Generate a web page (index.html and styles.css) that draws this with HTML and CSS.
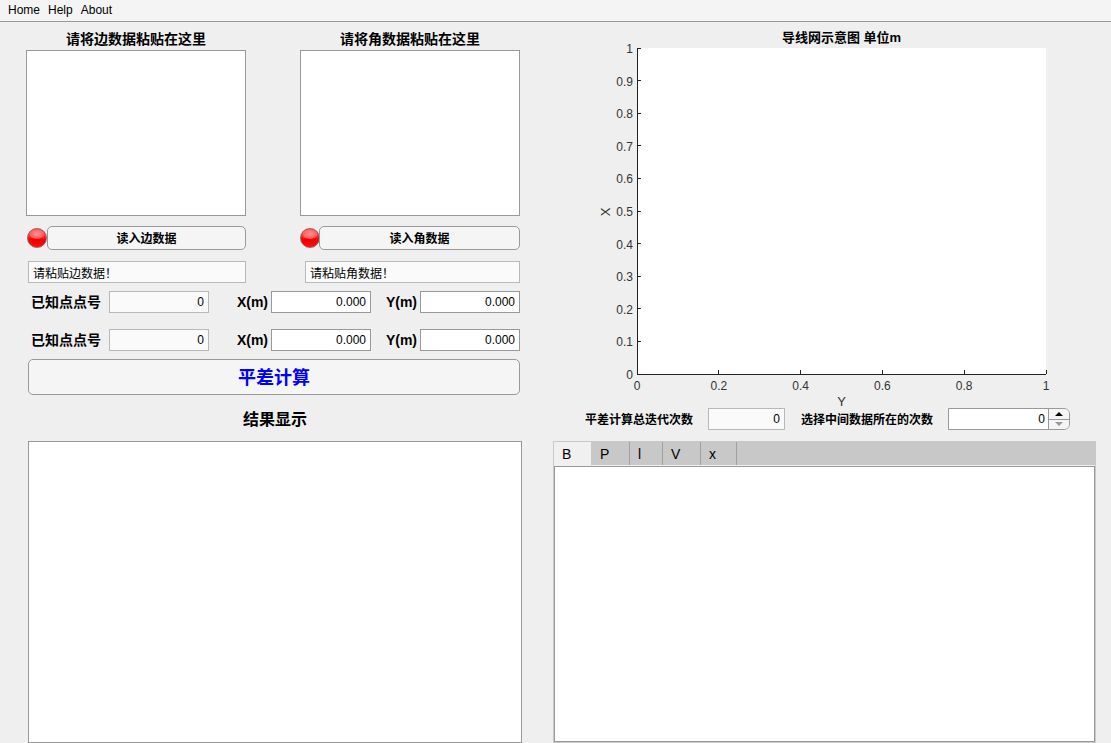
FILE: index.html
```html
<!DOCTYPE html>
<html lang="zh-CN">
<head>
<meta charset="utf-8">
<title>导线网平差</title>
<link rel="stylesheet" href="styles.css">
</head>
<body>
<nav class="menubar">
  <button type="button" class="menu-item">Home</button>
  <button type="button" class="menu-item">Help</button>
  <button type="button" class="menu-item">About</button>
</nav>
<main class="workspace">
  <section class="left-pane">
    <div class="sources">
      <div class="source">
        <label class="source-title" for="edges">请将边数据粘贴在这里</label>
        <textarea class="box source-text" id="edges"></textarea>
        <div class="load-row load-row-edge">
          <span class="lamp"></span>
          <button type="button" class="btn">读入边数据</button>
        </div>
        <input class="field status status-edge" type="text" aria-label="边数据状态" value="请粘贴边数据！" readonly>
      </div>
      <div class="source">
        <label class="source-title" for="angles">请将角数据粘贴在这里</label>
        <textarea class="box source-text" id="angles"></textarea>
        <div class="load-row">
          <span class="lamp"></span>
          <button type="button" class="btn btn-overlap">读入角数据</button>
        </div>
        <input class="field status status-angle" type="text" aria-label="角数据状态" value="请粘贴角数据！" readonly>
      </div>
    </div>
    <div class="points">
      <label class="point-label" for="p1">已知点点号</label>
      <input class="field num" id="p1" type="text" value="0" readonly>
      <label class="coord-label" for="x1">X(m)</label>
      <input class="field num editable" id="x1" type="text" value="0.000">
      <label class="coord-label" for="y1">Y(m)</label>
      <input class="field num editable" id="y1" type="text" value="0.000">
      <label class="point-label" for="p2">已知点点号</label>
      <input class="field num" id="p2" type="text" value="0" readonly>
      <label class="coord-label" for="x2">X(m)</label>
      <input class="field num editable" id="x2" type="text" value="0.000">
      <label class="coord-label" for="y2">Y(m)</label>
      <input class="field num editable" id="y2" type="text" value="0.000">
    </div>
    <button type="button" class="btn compute">平差计算</button>
    <label class="result-title" for="result">结果显示</label>
    <textarea class="box result-text" id="result"></textarea>
  </section>

  <section class="right-pane">
    <h2 class="chart-title">导线网示意图 单位m</h2>
    <div class="chart">
      <svg class="plot" role="img" aria-label="导线网示意图">
        <rect width="100%" height="100%" fill="#fff"/>
        <g class="axis">
          <line x1="0" y1="0" x2="0" y2="100%"/>
          <line x1="0" y1="100%" x2="100%" y2="100%"/>
          <line x1="0" x2="4" y1="0" y2="0"/>
          <line x1="0" x2="4" y1="10%" y2="10%"/>
          <line x1="0" x2="4" y1="20%" y2="20%"/>
          <line x1="0" x2="4" y1="30%" y2="30%"/>
          <line x1="0" x2="4" y1="40%" y2="40%"/>
          <line x1="0" x2="4" y1="50%" y2="50%"/>
          <line x1="0" x2="4" y1="60%" y2="60%"/>
          <line x1="0" x2="4" y1="70%" y2="70%"/>
          <line x1="0" x2="4" y1="80%" y2="80%"/>
          <line x1="0" x2="4" y1="90%" y2="90%"/>
        </g>
        <svg class="ticks" y="100%" width="100%" height="1">
          <line x1="20%" x2="20%" y1="0" y2="-4"/>
          <line x1="40%" x2="40%" y1="0" y2="-4"/>
          <line x1="60%" x2="60%" y1="0" y2="-4"/>
          <line x1="80%" x2="80%" y1="0" y2="-4"/>
          <line x1="100%" x2="100%" y1="0" y2="-4"/>
        </svg>
        <g class="y-values">
          <text x="-4" y="0" dy="5">1</text>
          <text x="-4" y="10%" dy="5">0.9</text>
          <text x="-4" y="20%" dy="5">0.8</text>
          <text x="-4" y="30%" dy="5">0.7</text>
          <text x="-4" y="40%" dy="5">0.6</text>
          <text x="-4" y="50%" dy="5">0.5</text>
          <text x="-4" y="60%" dy="5">0.4</text>
          <text x="-4" y="70%" dy="5">0.3</text>
          <text x="-4" y="80%" dy="5">0.2</text>
          <text x="-4" y="90%" dy="5">0.1</text>
          <text x="-4" y="100%" dy="5">0</text>
        </g>
        <g class="x-values">
          <text x="0" y="100%" dy="16">0</text>
          <text x="20%" y="100%" dy="16">0.2</text>
          <text x="40%" y="100%" dy="16">0.4</text>
          <text x="60%" y="100%" dy="16">0.6</text>
          <text x="80%" y="100%" dy="16">0.8</text>
          <text x="100%" y="100%" dy="16">1</text>
        </g>
        <text class="axis-name" x="50%" y="100%" dy="32">Y</text>
        <svg class="x-name" x="-27" y="50%" width="1" height="1">
          <text class="axis-name" x="-1" transform="rotate(-90)">X</text>
        </svg>
      </svg>
    </div>
    <div class="iterations">
      <label class="iter-label" for="total">平差计算总迭代次数</label>
      <input class="field num total" id="total" type="text" value="0" readonly>
      <label class="iter-label" for="pick">选择中间数据所在的次数</label>
      <div class="spinner">
        <input class="spin-value" id="pick" type="text" value="0">
        <div class="spin-buttons">
          <button type="button" class="spin" aria-label="增加"><svg width="8" height="4" viewBox="0 0 8 4"><path d="M0 4 4 0l4 4z" fill="#000"/></svg></button>
          <button type="button" class="spin spin-down" aria-label="减少" disabled><svg width="8" height="4" viewBox="0 0 8 4"><path d="M0 0h8L4 4z" fill="#999"/></svg></button>
        </div>
      </div>
    </div>
    <div class="tabs">
      <div class="tab-strip" role="tablist">
        <button type="button" role="tab" class="tab tab-active" aria-selected="true">B</button>
        <button type="button" role="tab" class="tab">P</button>
        <button type="button" role="tab" class="tab tab-l">l</button>
        <button type="button" role="tab" class="tab">V</button>
        <button type="button" role="tab" class="tab tab-x">x</button>
      </div>
      <textarea class="box tab-text" aria-label="B"></textarea>
    </div>
  </section>
</main>
</body>
</html>
```
FILE: styles.css
```css
* {
  box-sizing: border-box;
}

body {
  margin: 0;
  min-height: 100vh;
  display: flex;
  flex-direction: column;
  background: #efefef;
  color: #000;
  font: 12px/16px "Liberation Sans", "Noto Sans CJK SC", sans-serif;
}

button,
input,
textarea {
  font: inherit;
  color: inherit;
  margin: 0;
  border-radius: 0;
}

.menubar {
  display: flex;
  gap: 8px;
  height: 22px;
  padding: 0 8px;
  background: #f4f4f4;
  border-bottom: 1px solid #999;
}

.menu-item {
  padding: 0 0 2px;
  border: 0;
  background: none;
}

.workspace {
  flex: 1;
  display: grid;
  grid-template-columns: 496fr 543fr;
  gap: 31px;
  padding: 0 15px 0 26px;
}

.left-pane,
.right-pane {
  display: flex;
  flex-direction: column;
  min-width: 0;
}

.box {
  display: block;
  width: 100%;
  padding: 4px;
  border: 1px solid #999;
  background: #fff;
  resize: none;
}

.sources {
  display: grid;
  grid-template-columns: 1fr 1fr;
  gap: 54px;
  padding: 7px 2px 0 0;
}

.source {
  display: flex;
  flex-direction: column;
}

.source-title {
  font-size: 14px;
  line-height: 21px;
  font-weight: bold;
  text-align: center;
}

.source-text {
  height: 166px;
  margin-bottom: 10px;
}

.load-row {
  display: flex;
  align-items: center;
  margin-bottom: 11px;
}

.load-row-edge {
  padding-left: 1px;
}

.lamp {
  flex: none;
  width: 20px;
  height: 20px;
  border: 1px solid #a85c5c;
  border-radius: 50%;
  background:
    radial-gradient(ellipse 8px 5px at 50% 28%, rgba(255, 255, 255, 0.5), rgba(255, 255, 255, 0.25) 90%, transparent 100%),
    linear-gradient(#ff3030 0, #ff2020 45%, #ee0000 60%, #ff1010 100%);
}

.btn {
  flex: 1;
  height: 24px;
  padding: 2px 0 0;
  border: 1px solid #999;
  border-radius: 5px;
  background: #f5f5f5;
  font-weight: bold;
}

.btn-overlap {
  margin-left: -1px;
}

.field {
  min-width: 0;
  height: 22px;
  padding: 0 4px;
  border: 1px solid #b8b8b8;
  background: #fafafa;
}

.status-edge {
  margin-left: 2px;
}

.status-angle {
  margin-left: 5px;
}

.editable {
  background: #fff;
  border-color: #999;
}

.num {
  text-align: right;
}

.points {
  display: grid;
  grid-template-columns: 81px 1fr 62px 1fr 49px 1fr;
  row-gap: 16px;
  align-items: center;
  margin: 8px 2px;
}

.point-label,
.coord-label {
  font-size: 14px;
  line-height: 22px;
  font-weight: bold;
  text-align: right;
}

.point-label {
  padding-right: 8px;
}

.coord-label {
  padding-right: 3px;
}

.compute {
  flex: none;
  height: 36px;
  margin: 0 2px;
  color: #00f;
  font-size: 18px;
}

.result-title {
  padding: 13px 0 9px 2px;
  font-size: 16px;
  line-height: 24px;
  font-weight: bold;
  text-align: center;
}

.result-text {
  flex: 1;
  width: auto;
  margin-left: 2px;
}

.chart-title {
  margin: 0;
  padding: 6px 0 0 34px;
  font-size: 13px;
  line-height: 20px;
  text-align: center;
}

.chart {
  padding: 0 50px 34px 84px;
}

.plot {
  display: block;
  width: 100%;
  height: 326px;
  overflow: visible;
}

.plot line {
  stroke: #222;
  shape-rendering: crispEdges;
}

.ticks,
.x-name {
  overflow: visible;
}

.plot text {
  fill: #333;
}

.y-values {
  text-anchor: end;
}

.x-values,
.axis-name {
  text-anchor: middle;
}

.plot .axis-name {
  font-size: 13px;
}

.iterations {
  display: flex;
  align-items: center;
  justify-content: flex-end;
  padding-right: 26px;
  margin-bottom: 11px;
}

.iter-label {
  padding-top: 2px;
  font-weight: bold;
}

.total {
  width: 77px;
  margin: 0 16px 0 15px;
}

.spinner {
  display: flex;
  width: 122px;
  height: 22px;
  margin-left: 15px;
  border: 1px solid #999;
  border-radius: 0 6px 6px 0;
  background: #fff;
  overflow: hidden;
}

.spin-value {
  flex: 1;
  min-width: 0;
  padding: 0 3px;
  border: 0;
  background: #fff;
  text-align: right;
}

.spin-buttons {
  display: flex;
  flex-direction: column;
  width: 21px;
  border-left: 1px solid #999;
}

.spin {
  flex: 1;
  display: flex;
  align-items: center;
  justify-content: center;
  padding: 0;
  border: 0;
  background: #f5f5f5;
}

.spin-down {
  border-top: 1px solid #999;
}

.tabs {
  flex: 1;
  display: flex;
  flex-direction: column;
  border: 1px solid #c8c8c8;
}

.tab-strip {
  display: flex;
  height: 23px;
  margin-bottom: 1px;
  background: #c8c8c8;
}

.tab {
  width: 38px;
  padding: 0 8px;
  border: 0;
  border-right: 1px solid #a0a0a0;
  background: none;
  font-size: 14px;
  text-align: left;
}

.tab-active {
  background: #f0f0f0;
  border-right-color: #c8c8c8;
}

.tab-l {
  width: 33px;
}

.tab-x {
  width: 36px;
}

.tab-text {
  flex: 1;
}
```
